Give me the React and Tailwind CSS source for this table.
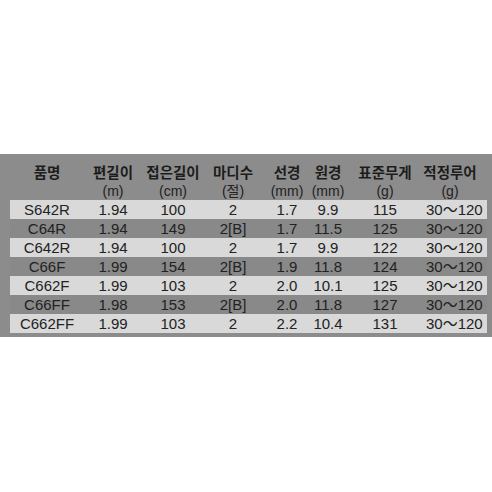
const cols = "grid grid-cols-[74px_58px_62px_58px_50px_32px_82px_48px]";

const headers = [
  ["품명", ""],
  ["편길이", "(m)"],
  ["접은길이", "(cm)"],
  ["마디수", "(절)"],
  ["선경", "(mm)"],
  ["원경", "(mm)"],
  ["표준무게", "(g)"],
  ["적정루어", "(g)"],
];

const rows = [
  ["S642R", "1.94", "100", "2", "1.7", "9.9", "115", "30～120"],
  ["C64R", "1.94", "149", "2[B]", "1.7", "11.5", "125", "30～120"],
  ["C642R", "1.94", "100", "2", "1.7", "9.9", "122", "30～120"],
  ["C66F", "1.99", "154", "2[B]", "1.9", "11.8", "124", "30～120"],
  ["C662F", "1.99", "103", "2", "2.0", "10.1", "125", "30～120"],
  ["C66FF", "1.98", "153", "2[B]", "2.0", "11.8", "127", "30～120"],
  ["C662FF", "1.99", "103", "2", "2.2", "10.4", "131", "30～120"],
];

export default function App() {
  return (
    <div className="w-[492px] h-[492px] bg-white pt-[154px]">
      <div className="bg-[#8c8c8c] pl-[10px] pr-[5px] pb-[4px]">
        <div className={`${cols} pt-[8px] h-[46px]`}>
          {headers.map(([k, u], i) => (
            <div key={i} className="flex flex-col items-center whitespace-nowrap">
              <span className="text-[14.5px] leading-[20px] font-bold text-[#1c1c1c] [font-family:'Noto_Sans_CJK_KR',sans-serif]">
                {k}
              </span>
              <span className="text-[14px] leading-[18px] text-[#222] [font-family:'Liberation_Sans','Noto_Sans_CJK_KR',sans-serif]">
                {u}
              </span>
            </div>
          ))}
        </div>
        {rows.map((r, ri) => (
          <div
            key={ri}
            className={`${cols} h-[19px] items-center ${ri % 2 === 0 ? "bg-[#d9d9d9]" : "bg-[#898989]"}`}
          >
            {r.map((c, ci) => (
              <div
                key={ci}
                className="text-center whitespace-nowrap text-[15px] leading-[19px] text-[#222] [font-family:'Liberation_Sans','Noto_Sans_CJK_KR',sans-serif]"
              >
                {c}
              </div>
            ))}
          </div>
        ))}
      </div>
    </div>
  );
}
